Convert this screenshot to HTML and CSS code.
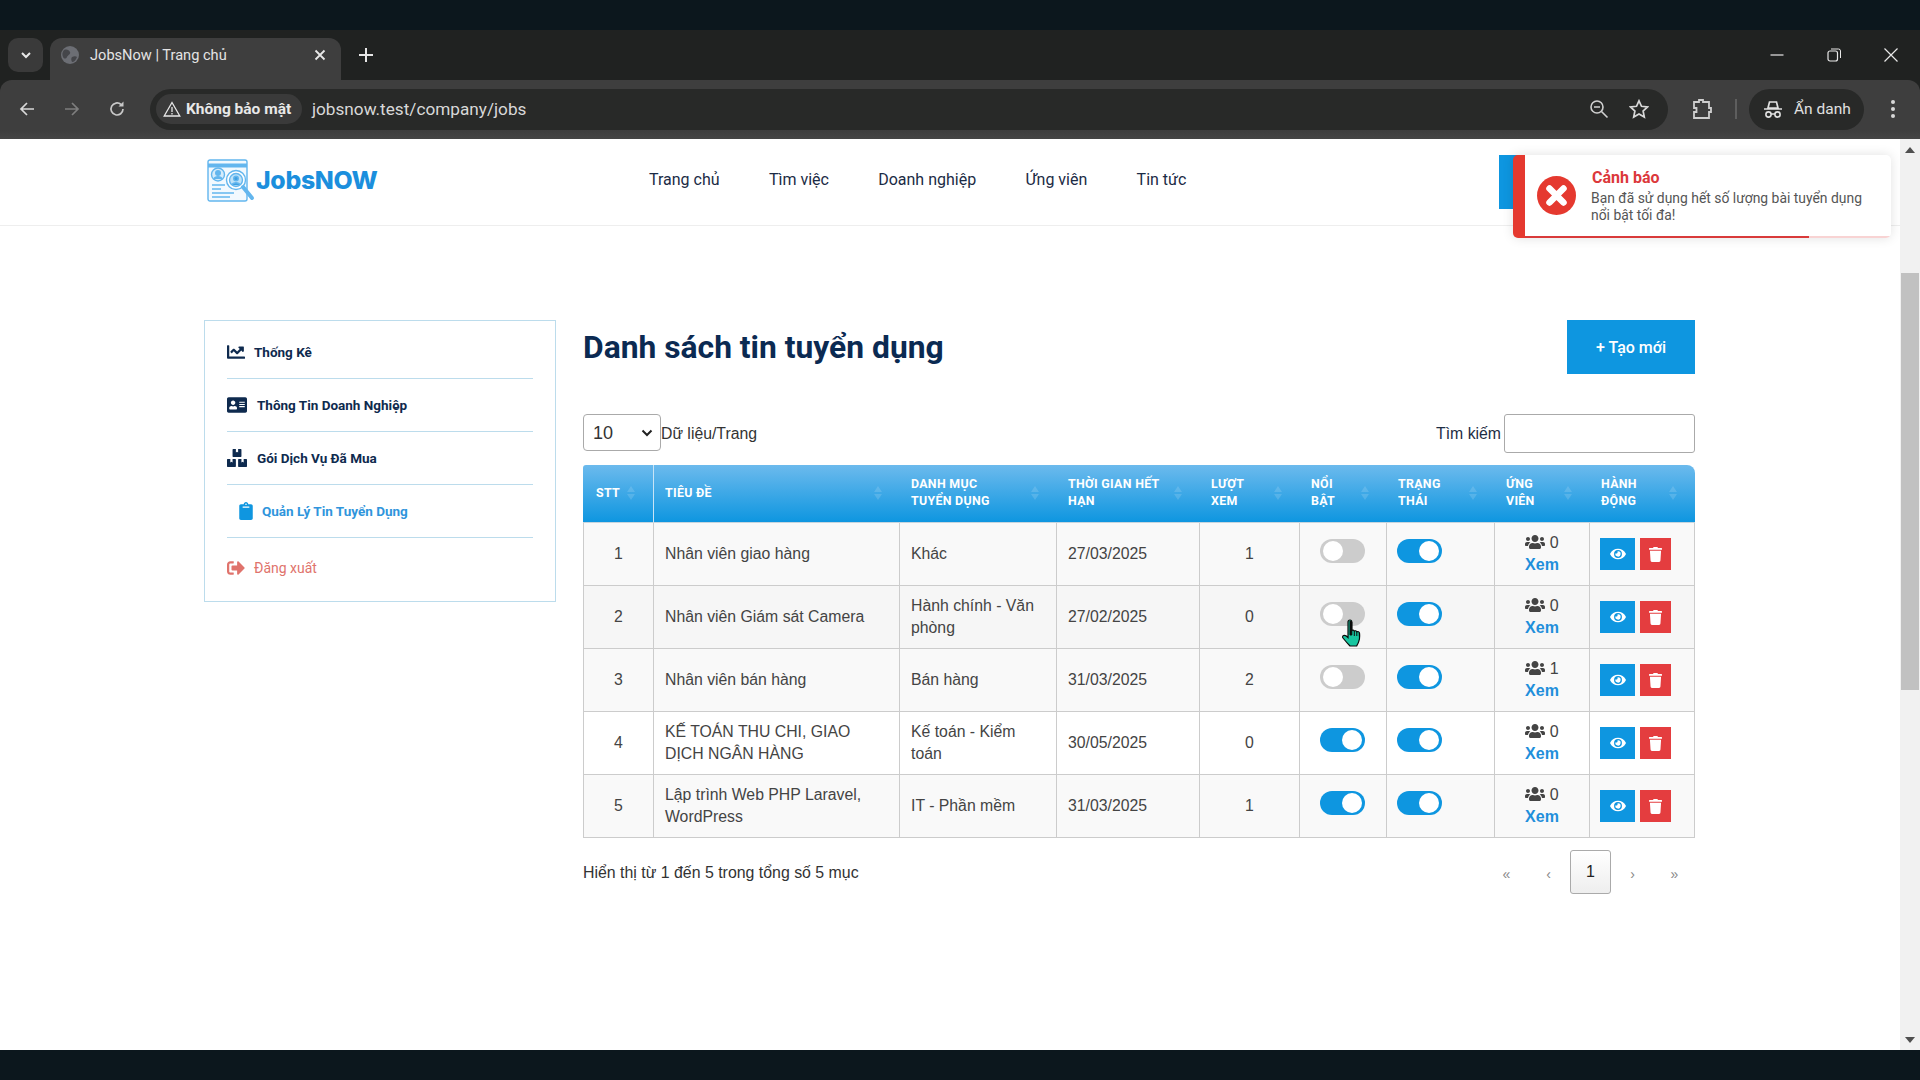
FILE: index.html
```html
<!DOCTYPE html>
<html lang="vi">
<head>
<meta charset="utf-8">
<title>JobsNow | Trang chủ</title>
<link rel="stylesheet" href="styles.css">
</head>
<body>
<svg class="defs" width="0" height="0" aria-hidden="true">
  <symbol id="i-eye" viewBox="0 0 576 512"><path d="M572.52 241.4C518.29 135.59 410.93 64 288 64S57.68 135.64 3.48 241.41a32.35 32.35 0 0 0 0 29.19C57.71 376.41 165.07 448 288 448s230.32-71.64 284.52-177.41a32.35 32.35 0 0 0 0-29.19zM288 400a144 144 0 1 1 144-144 143.93 143.93 0 0 1-144 144zm0-240a95.31 95.31 0 0 0-25.31 3.79 47.85 47.85 0 0 1-66.9 66.9A95.78 95.78 0 1 0 288 160z"/></symbol>
  <symbol id="i-trash" viewBox="0 0 448 512"><path d="M432 32H312l-9.4-18.7A24 24 0 0 0 281.1 0H166.8a23.72 23.72 0 0 0-21.4 13.3L136 32H16A16 16 0 0 0 0 48v32a16 16 0 0 0 16 16h416a16 16 0 0 0 16-16V48a16 16 0 0 0-16-16zM53.2 467a48 48 0 0 0 47.9 45h245.8a48 48 0 0 0 47.9-45L416 128H32z"/></symbol>
  <symbol id="i-users" viewBox="0 0 640 512"><path d="M96 224c35.3 0 64-28.7 64-64s-28.7-64-64-64-64 28.7-64 64 28.7 64 64 64zm448 0c35.3 0 64-28.7 64-64s-28.7-64-64-64-64 28.7-64 64 28.7 64 64 64zm32 32h-64c-17.6 0-33.5 7.1-45.1 18.6 40.3 22.1 68.9 62 75.1 109.4h66c17.7 0 32-14.3 32-32v-32c0-35.3-28.7-64-64-64zm-256 0c61.9 0 112-50.1 112-112S381.9 32 320 32 208 82.1 208 144s50.1 112 112 112zm76.8 32h-8.3c-20.8 10-43.9 16-68.5 16s-47.6-6-68.5-16h-8.3C179.6 288 128 339.6 128 403.2V432c0 26.5 21.5 48 48 48h288c26.5 0 48-21.5 48-48v-28.8c0-63.6-51.6-115.2-115.2-115.2zm-223.7-13.4C161.5 263.1 145.6 256 128 256H64c-35.3 0-64 28.7-64 64v32c0 17.7 14.3 32 32 32h65.9c6.3-47.4 34.9-87.3 75.2-109.4z"/></symbol>
</svg>

<div class="top-strip"></div>

<div class="tabstrip">
  <div class="tab-search">
    <svg width="14" height="14" viewBox="0 0 14 14"><path d="M3 5l4 4 4-4" fill="none" stroke="#e8e8e8" stroke-width="2"/></svg>
  </div>
  <div class="tab">
    <svg class="globe" width="20" height="20" viewBox="0 0 20 20"><circle cx="10" cy="10" r="9" fill="#6c6e74"/><path d="M4 5c3-1 5 0 6 2s-2 3-3 5-3 2-4 0-1-5 1-7zM12 12c2-1 4-1 5 0-1 3-3 5-5 5-1-2-1-4 0-5z" fill="#45464a"/></svg>
    <span class="tab-title">JobsNow | Trang chủ</span>
    <svg class="tab-close" width="14" height="14" viewBox="0 0 14 14"><path d="M2.5 2.5l9 9M11.500 2.500l-9 9" stroke="#e8e8e8" stroke-width="1.800"/></svg>
  </div>
  <svg class="tab-new" width="16" height="16" viewBox="0 0 16 16"><path d="M8 1v14M1 8h14" stroke="#e6e6e6" stroke-width="2"/></svg>
  <div class="win-controls">
    <svg width="14" height="14" viewBox="0 0 14 14"><path d="M0.500 7h13" stroke="#e8e8e8" stroke-width="1.200"/></svg>
    <svg width="14" height="14" viewBox="0 0 14 14"><rect x="1" y="3" width="9.500" height="10" rx="2" fill="none" stroke="#e8e8e8" stroke-width="1.200"/><path d="M4 1h7.500a2 2 0 0 1 2 2v7" fill="none" stroke="#e8e8e8" stroke-width="1"/></svg>
    <svg width="14" height="14" viewBox="0 0 14 14"><path d="M0.500 0.500l13 13M13.500 0.500l-13 13" stroke="#e8e8e8" stroke-width="1.200"/></svg>
  </div>
</div>

<div class="toolbar-wrap">
<div class="toolbar">
  <div class="nav-arrows">
    <svg width="18" height="18" viewBox="0 0 18 18"><path d="M16 9H3M9 3L3 9l6 6" fill="none" stroke="#d8d8d8" stroke-width="1.700"/></svg>
    <svg width="18" height="18" viewBox="0 0 18 18"><path d="M2 9h13M9 3l6 6-6 6" fill="none" stroke="#7e7e7e" stroke-width="1.700"/></svg>
    <svg width="18" height="18" viewBox="0 0 18 18"><path d="M15 9a6 6 0 1 1-2-4.500" fill="none" stroke="#c8c8c8" stroke-width="1.700"/><path d="M15.500 1.500v5h-5z" fill="#c8c8c8"/></svg>
  </div>
  <div class="omnibox">
    <div class="chip">
      <svg width="18" height="16" viewBox="0 0 18 16"><path d="M9 1.500L16.800 15H1.200zM9 6v5M9 12v1.500" fill="none" stroke="#e8e8e8" stroke-width="1.300"/></svg>
      <span class="chip-text">Không bảo mật</span>
    </div>
    <span class="url">jobsnow.test/company/jobs</span>
    <div class="omni-icons">
      <svg width="20" height="20" viewBox="0 0 20 20"><circle cx="8" cy="8" r="6" fill="none" stroke="#d0d0d0" stroke-width="1.600"/><path d="M5 8h6M12.500 12.500l6 6" stroke="#d0d0d0" stroke-width="1.600"/></svg>
      <svg width="20" height="20" viewBox="0 0 20 20"><path d="M10 1.800l2.500 5.500 6 .7-4.400 4 1.200 6L10 15l-5.300 3 1.200-6-4.400-4 6-.7z" fill="none" stroke="#d8d8d8" stroke-width="1.700"/></svg>
    </div>
  </div>
  <svg class="ext" width="22" height="22" viewBox="0 0 22 22"><path d="M3 4h5V2h4v2h6v6h2v4h-2v6H3v-6h2.500v-4H3z" fill="none" stroke="#cfcfcf" stroke-width="1.800"/></svg>
  <div class="divider"></div>
  <div class="incog">
    <svg width="20" height="20" viewBox="0 0 20 20"><path d="M5 9l1.500-6h7L15 9zM1 10h18" fill="none" stroke="#e0e0e0" stroke-width="1.700"/><circle cx="5.500" cy="15.500" r="2.600" fill="none" stroke="#e0e0e0" stroke-width="1.600"/><circle cx="14.500" cy="15.500" r="2.600" fill="none" stroke="#e0e0e0" stroke-width="1.600"/><path d="M8 15h4" stroke="#e0e0e0" stroke-width="1.500"/></svg>
    <span class="incog-text">Ẩn danh</span>
  </div>
  <svg class="dots" width="6" height="20" viewBox="0 0 6 20"><circle cx="3" cy="3" r="2" fill="#d8d8d8"/><circle cx="3" cy="10" r="2" fill="#d8d8d8"/><circle cx="3" cy="17" r="2" fill="#d8d8d8"/></svg>
</div>
</div>

<div class="viewport">
  <div class="page">
    <header class="site-header">
      <div class="logo">
        <svg width="48" height="48" viewBox="0 0 48 48" fill="none" stroke="#63b6ee" stroke-width="1.400">
          <rect x="1" y="1" width="39" height="41" rx="2" fill="#f2f9fe"/>
          <path d="M1 6.500h39" stroke-width="4"/>
          <circle cx="11" cy="15.500" r="6.500" fill="#d5ecfb"/>
          <circle cx="11" cy="14" r="2.300" fill="#63b6ee"/>
          <path d="M7 20c1-3 7-3 8 0" fill="#63b6ee"/>
          <path d="M5 26h13M5 30h9M5 34h22M5 38h18"/>
          <circle cx="29" cy="21" r="9.500" fill="#fff"/>
          <circle cx="29" cy="21" r="6.500" fill="#bfe2f8"/>
          <circle cx="29" cy="19.500" r="2.300" fill="#3f9fe0"/>
          <path d="M25 26c1-3 7-3 8 0" fill="#3f9fe0"/>
          <path d="M36 28l9 11" stroke-width="4" stroke="#63b6ee" stroke-linecap="round"/>
        </svg>
        <span class="logo-text">JobsNOW</span>
      </div>
      <nav class="main-nav">
        <span>Trang chủ</span>
        <span>Tìm việc</span>
        <span>Doanh nghiệp</span>
        <span>Ứng viên</span>
        <span>Tin tức</span>
      </nav>
      <div class="header-btn"></div>
    </header>

    <div class="content">
      <aside class="sidebar">
        <div class="side-item">
          <svg class="side-ico ico-chart" viewBox="0 0 512 512"><path d="M496 384H64V80c0-8.840-7.160-16-16-16H16C7.160 64 0 71.160 0 80v336c0 17.670 14.330 32 32 32h464c8.840 0 16-7.160 16-16v-32c0-8.840-7.160-16-16-16zM464 96H345.940c-21.380 0-32.090 25.850-16.970 40.970l32.400 32.400L288 242.750l-73.370-73.370c-12.500-12.500-32.760-12.500-45.250 0l-68.690 68.690c-6.250 6.250-6.250 16.380 0 22.630l22.620 22.620c6.250 6.250 16.380 6.250 22.630 0L192 237.250l73.370 73.370c12.500 12.500 32.760 12.500 45.250 0l96-96 32.400 32.400c15.120 15.120 40.970 4.410 40.970-16.970V112c.01-8.840-7.150-16-15.990-16z"/></svg>
          <span>Thống Kê</span>
        </div>
        <div class="side-item">
          <svg class="side-ico ico-card" viewBox="0 0 576 512"><path d="M528 32H48C21.500 32 0 53.500 0 80v352c0 26.500 21.500 48 48 48h480c26.500 0 48-21.500 48-48V80c0-26.500-21.500-48-48-48zm-352 96c35.300 0 64 28.700 64 64s-28.700 64-64 64-64-28.700-64-64 28.700-64 64-64zm112 236.800c0 10.600-10 19.200-22.400 19.200H86.400C74 384 64 375.400 64 364.800v-19.200c0-31.800 30.100-57.600 67.200-57.600h5c12.300 5.100 25.700 8 39.800 8s27.600-2.900 39.800-8h5c37.100 0 67.200 25.800 67.200 57.600v19.200zM512 312c0 4.400-3.600 8-8 8H360c-4.400 0-8-3.600-8-8v-16c0-4.400 3.600-8 8-8h144c4.400 0 8 3.600 8 8v16zm0-64c0 4.400-3.600 8-8 8H360c-4.400 0-8-3.600-8-8v-16c0-4.400 3.600-8 8-8h144c4.400 0 8 3.600 8 8v16zm0-64c0 4.400-3.600 8-8 8H360c-4.400 0-8-3.600-8-8v-16c0-4.400 3.600-8 8-8h144c4.400 0 8 3.600 8 8v16z"/></svg>
          <span>Thông Tin Doanh Nghiệp</span>
        </div>
        <div class="side-item">
          <svg class="side-ico ico-card" viewBox="0 0 576 512"><path d="M560 288h-80v96l-32-21.300-32 21.300v-96h-80c-8.800 0-16 7.200-16 16v192c0 8.800 7.200 16 16 16h224c8.800 0 16-7.200 16-16V304c0-8.800-7.200-16-16-16zm-384-64h224c8.800 0 16-7.200 16-16V16c0-8.800-7.200-16-16-16h-80v96l-32-21.300L256 96V0h-80c-8.800 0-16 7.200-16 16v192c0 8.800 7.200 16 16 16zm64 64h-80v96l-32-21.300L96 384v-96H16c-8.800 0-16 7.200-16 16v192c0 8.800 7.200 16 16 16h224c8.800 0 16-7.200 16-16V304c0-8.800-7.200-16-16-16z"/></svg>
          <span>Gói Dịch Vụ Đã Mua</span>
        </div>
        <div class="side-item active">
          <svg class="side-ico ico-clip" viewBox="0 0 384 512"><path d="M384 112v352c0 26.510-21.490 48-48 48H48c-26.510 0-48-21.490-48-48V112c0-26.510 21.490-48 48-48h80c0-35.290 28.710-64 64-64s64 28.710 64 64h80c26.510 0 48 21.490 48 48zM192 40c-13.255 0-24 10.745-24 24s10.745 24 24 24 24-10.745 24-24-10.745-24-24-24m96 114v-20a6 6 0 0 0-6-6H102a6 6 0 0 0-6 6v20a6 6 0 0 0 6 6h180a6 6 0 0 0 6-6z"/></svg>
          <span>Quản Lý Tin Tuyển Dụng</span>
        </div>
        <div class="side-item logout">
          <svg class="side-ico ico-chart" viewBox="0 0 512 512"><path d="M497 273L329 441c-15 15-41 4.500-41-17v-96H152c-13.300 0-24-10.700-24-24v-96c0-13.300 10.700-24 24-24h136V88c0-21.400 25.900-32 41-17l168 168c9.300 9.400 9.300 24.600 0 34zM192 436v-40c0-6.600-5.400-12-12-12H96c-17.700 0-32-14.300-32-32V160c0-17.700 14.300-32 32-32h84c6.600 0 12-5.400 12-12V76c0-6.600-5.400-12-12-12H96c-53 0-96 43-96 96v192c0 53 43 96 96 96h84c6.600 0 12-5.400 12-12z"/></svg>
          <span>Đăng xuất</span>
        </div>
      </aside>

      <main class="main">
        <div class="title-row">
          <h1 class="title">Danh sách tin tuyển dụng</h1>
          <div class="btn-create">+ Tạo mới</div>
        </div>

        <div class="controls">
          <div class="ctrl-left">
            <select class="page-size"><option>10</option></select>
            <span class="ctrl-label">Dữ liệu/Trang</span>
          </div>
          <div class="ctrl-right">
            <span class="ctrl-label search-label">Tìm kiếm</span>
            <input class="search" type="text">
          </div>
        </div>

        <table class="jobs">
          <colgroup>
            <col class="c1"><col class="c2"><col class="c3"><col class="c4"><col class="c5"><col class="c6"><col class="c7"><col class="c8"><col class="c9">
          </colgroup>
          <thead>
            <tr>
              <th class="th-first">STT</th>
              <th>Tiêu đề</th>
              <th>Danh mục tuyển dụng</th>
              <th>Thời gian hết hạn</th>
              <th>Lượt xem</th>
              <th>Nổi bật</th>
              <th>Trạng thái</th>
              <th>Ứng viên</th>
              <th class="th-last">Hành động</th>
            </tr>
          </thead>
          <tbody>
            <tr class="odd">
              <td class="center">1</td>
              <td>Nhân viên giao hàng</td>
              <td>Khác</td>
              <td>27/03/2025</td>
              <td class="center">1</td>
              <td><span class="toggle"></span></td>
              <td class="tight"><span class="toggle on"></span></td>
              <td class="center"><div class="cand"><svg class="users"><use href="#i-users"/></svg> 0</div><a class="xem">Xem</a></td>
              <td><div class="actions"><span class="act view"><svg class="i-eye"><use href="#i-eye"/></svg></span><span class="act del"><svg class="i-trash"><use href="#i-trash"/></svg></span></div></td>
            </tr>
            <tr class="hover">
              <td class="center">2</td>
              <td>Nhân viên Giám sát Camera</td>
              <td>Hành chính - Văn phòng</td>
              <td>27/02/2025</td>
              <td class="center">0</td>
              <td><span class="toggle"></span></td>
              <td class="tight"><span class="toggle on"></span></td>
              <td class="center"><div class="cand"><svg class="users"><use href="#i-users"/></svg> 0</div><a class="xem">Xem</a></td>
              <td><div class="actions"><span class="act view"><svg class="i-eye"><use href="#i-eye"/></svg></span><span class="act del"><svg class="i-trash"><use href="#i-trash"/></svg></span></div></td>
            </tr>
            <tr class="odd">
              <td class="center">3</td>
              <td>Nhân viên bán hàng</td>
              <td>Bán hàng</td>
              <td>31/03/2025</td>
              <td class="center">2</td>
              <td><span class="toggle"></span></td>
              <td class="tight"><span class="toggle on"></span></td>
              <td class="center"><div class="cand"><svg class="users"><use href="#i-users"/></svg> 1</div><a class="xem">Xem</a></td>
              <td><div class="actions"><span class="act view"><svg class="i-eye"><use href="#i-eye"/></svg></span><span class="act del"><svg class="i-trash"><use href="#i-trash"/></svg></span></div></td>
            </tr>
            <tr>
              <td class="center">4</td>
              <td>KẾ TOÁN THU CHI, GIAO DỊCH NGÂN HÀNG</td>
              <td>Kế toán - Kiểm toán</td>
              <td>30/05/2025</td>
              <td class="center">0</td>
              <td><span class="toggle on"></span></td>
              <td class="tight"><span class="toggle on"></span></td>
              <td class="center"><div class="cand"><svg class="users"><use href="#i-users"/></svg> 0</div><a class="xem">Xem</a></td>
              <td><div class="actions"><span class="act view"><svg class="i-eye"><use href="#i-eye"/></svg></span><span class="act del"><svg class="i-trash"><use href="#i-trash"/></svg></span></div></td>
            </tr>
            <tr class="odd">
              <td class="center">5</td>
              <td>Lập trình Web PHP Laravel, WordPress</td>
              <td>IT - Phần mềm</td>
              <td>31/03/2025</td>
              <td class="center">1</td>
              <td><span class="toggle on"></span></td>
              <td class="tight"><span class="toggle on"></span></td>
              <td class="center"><div class="cand"><svg class="users"><use href="#i-users"/></svg> 0</div><a class="xem">Xem</a></td>
              <td><div class="actions"><span class="act view"><svg class="i-eye"><use href="#i-eye"/></svg></span><span class="act del"><svg class="i-trash"><use href="#i-trash"/></svg></span></div></td>
            </tr>
          </tbody>
        </table>

        <div class="table-foot">
          <span class="info">Hiển thị từ 1 đến 5 trong tổng số 5 mục</span>
          <div class="pager">
            <span class="pg">«</span>
            <span class="pg">‹</span>
            <span class="pg current">1</span>
            <span class="pg">›</span>
            <span class="pg">»</span>
          </div>
        </div>
      </main>
    </div>

    <div class="toast">
      <svg class="toast-ico" width="39" height="39" viewBox="0 0 39 39"><circle cx="19.500" cy="19.500" r="19.500" fill="#e5392f"/><path d="M12.500 12.500l14 14M26.500 12.500l-14 14" stroke="#fff" stroke-width="6.500" stroke-linecap="round"/></svg>
      <div class="toast-body">
        <div class="toast-title">Cảnh báo</div>
        <div class="toast-msg">Bạn đã sử dụng hết số lượng bài tuyển dụng nổi bật tối đa!</div>
      </div>
      <div class="toast-progress"></div>
    </div>

    <svg class="cursor" width="22" height="28" viewBox="0 0 22 28">
      <path d="M8 1c1.200 0 1.800.9 1.800 2v8.500c.8-.6 2-.4 2.500.5.9-.5 2-.3 2.500.7 1-.4 2.500 0 2.700 1.400.3 3 .2 6-.7 8.200-.6 2-1.500 3.300-2.100 4.700H8C5.500 24.500 3 21.500 1 19c-.7-1-.4-2 .6-2.500 1.200-.6 2.800.3 4.400 2V3c0-1.100.8-2 2-2z" fill="#17c6a0" stroke="#0a0a0a" stroke-width="1.200"/>
      <path d="M8 2v14h1.800V3zM12.300 12v5M14.800 12.700V17M17.300 14v3.500" fill="#0a0a0a" stroke="#0a0a0a" stroke-width="1"/>
    </svg>
  </div>

  <div class="scrollbar">
    <div class="sb-btn"><span class="tri-up"></span></div>
    <div class="sb-thumb"></div>
    <div class="sb-track"></div>
    <div class="sb-btn"><span class="tri-down"></span></div>
  </div>
</div>

<div class="bottom-strip"></div>
</body>
</html>
```
FILE: styles.css
```css
* { box-sizing: border-box; }
html, body { margin: 0; padding: 0; }
body {
  width: 1920px;
  height: 1080px;
  overflow: hidden;
  display: flex;
  flex-direction: column;
  font-family: "Liberation Sans", Arial, sans-serif;
  background: #fff;
}
.defs { position: absolute; }
.top-strip, .bottom-strip { height: 30px; background: #0c171d; flex: none; }

/* browser chrome */
.tabstrip {
  height: 50px;
  flex: none;
  background: #202221;
  display: flex;
  align-items: flex-start;
  padding: 8px 0 0 8px;
}
.tab-search {
  width: 35px;
  height: 34px;
  border-radius: 10px;
  background: #3a3a3a;
  display: flex;
  align-items: center;
  justify-content: center;
}
.tab {
  width: 291px;
  height: 42px;
  margin-left: 7px;
  border-radius: 12px 12px 0 0;
  background: #3e3e3e;
  display: flex;
  align-items: center;
  padding: 0 14px 8px 10px;
}
.globe { flex: none; }
.tab-title {
  margin-left: 10px;
  flex: 1;
  color: #e4e4e4;
  font: 400 14.6px Roboto, sans-serif;
}
.tab-new { margin: 9px 0 0 17px; }
.win-controls {
  margin-left: auto;
  display: flex;
  gap: 43px;
  padding: 10px 22px 0 0;
}
.toolbar-wrap { flex: none; background: #202221; }
.toolbar {
  height: 59px;
  background: linear-gradient(#3e3e3e, #3e3e3e 85%, #454545);
  border-radius: 12px 12px 0 0;
  display: flex;
  align-items: center;
  padding: 0 24px 1px 18px;
}
.nav-arrows { display: flex; gap: 27px; width: 114px; }
.omnibox {
  width: 1519px;
  height: 41px;
  margin-left: 18px;
  border-radius: 21px;
  background: #282928;
  display: flex;
  align-items: center;
  padding: 0 19px 0 6px;
}
.chip {
  height: 30px;
  width: 146px;
  border-radius: 15px;
  background: #3a3a3a;
  display: flex;
  align-items: center;
  padding-left: 7px;
  gap: 5px;
}
.chip-text {
  color: #e8e8e8;
  font: 700 15.5px Roboto, sans-serif;
  white-space: nowrap;
}
.url {
  margin-left: 10px;
  color: #d8d8d8;
  font: 400 17.2px Roboto, sans-serif;
}
.omni-icons { margin-left: auto; display: flex; gap: 20px; }
.ext { margin-left: 23px; flex: none; }
.divider { width: 2px; height: 20px; background: #5e5e5e; margin-left: 22px; flex: none; }
.incog {
  width: 115px;
  height: 41px;
  margin-left: 12px;
  border-radius: 21px;
  background: #282928;
  display: flex;
  align-items: center;
  padding-left: 14px;
  gap: 11px;
  flex: none;
}
.incog-text { color: #e0e0e0; font: 400 15.5px Roboto, sans-serif; white-space: nowrap; }
.dots { margin-left: 26px; flex: none; }

/* page */
.viewport { flex: 1; display: flex; min-height: 0; }
.page { flex: 1; position: relative; overflow: hidden; background: #fff; }
.scrollbar { width: 20px; background: #f1f1f1; display: flex; flex-direction: column; }
.sb-btn { height: 21px; flex: none; display: flex; align-items: center; justify-content: center; }
.tri-up { border: 5px solid transparent; border-top: 0; border-bottom: 6px solid #505050; }
.tri-down { border: 5px solid transparent; border-bottom: 0; border-top: 6px solid #505050; }
.sb-thumb { height: 417px; margin: 113px 1px 0; background: #c1c1c1; flex: none; }
.sb-track { flex: 1; }

.site-header {
  height: 87px;
  border-bottom: 1px solid #eeeeee;
  display: flex;
  align-items: center;
  padding: 0 205px 0 207px;
}
.logo { display: flex; align-items: center; width: 171px; flex: none; }
.logo svg { flex: none; margin-top: 2px; }
.logo-text {
  margin: 0 0 5px 1px;
  color: #1b8fdd;
  font: 800 24.8px Inter, sans-serif;
  letter-spacing: -.3px;
  white-space: nowrap;
}
.main-nav {
  display: flex;
  gap: 49.3px;
  margin: 0 0 6px 271px;
  color: #1b2b45;
  font: 400 16px Roboto, sans-serif;
}
.header-btn { margin-left: auto; width: 196px; height: 54px; background: #0e96e0; }

.content {
  display: flex;
  align-items: flex-start;
  gap: 27px;
  padding: 94px 205px 0 204px;
}
.sidebar {
  width: 352px;
  flex: none;
  height: 282px;
  border: 1px solid #bcdcec;
  padding: 5px 22px 0;
  font: 700 13.5px Roboto, sans-serif;
  color: #0e2a4e;
}
.side-item {
  height: 53px;
  display: flex;
  align-items: center;
  border-bottom: 1px solid #bcdcec;
  fill: #0e2a4e;
}
.side-ico { flex: none; }
.ico-chart { width: 18px; height: 18px; margin-right: 9px; }
.ico-card { width: 20px; height: 18px; margin-right: 10px; }
.ico-clip { width: 14px; height: 18px; margin: 0 9px 0 12px; }
.side-item.active { color: #2f95dc; fill: #0f96e0; }
.side-item.logout { border-bottom: 0; height: 59px; color: #e0736c; fill: #e0736c; font-weight: 400; font-size: 14px; }

.main { flex: 1; min-width: 0; }
.title-row { display: flex; justify-content: space-between; align-items: center; height: 54px; }
.title {
  margin: 0;
  color: #0b2a52;
  font: 700 31.8px Roboto, sans-serif;
}
.btn-create {
  width: 128px;
  height: 54px;
  background: #0e96e0;
  color: #fff;
  font: 500 16px Roboto, sans-serif;
  display: flex;
  align-items: center;
  justify-content: center;
}
.controls {
  margin-top: 40px;
  height: 51px;
  display: flex;
  justify-content: space-between;
  align-items: flex-start;
}
.ctrl-left, .ctrl-right { display: flex; align-items: center; }
.ctrl-label { font-size: 15.8px; color: #333; white-space: nowrap; }
.ctrl-left .ctrl-label { padding-top: 2px; }
.page-size {
  appearance: none;
  width: 78px;
  height: 37px;
  padding: 0 0 0 9px;
  border: 1px solid #aaa;
  border-radius: 4px;
  background: #fff url("data:image/svg+xml,%3Csvg xmlns='http://www.w3.org/2000/svg' width='12' height='8'%3E%3Cpath d='M1.500 1.500L6 6l4.500-4.500' fill='none' stroke='%23222' stroke-width='2'/%3E%3C/svg%3E") no-repeat right 7px center;
  font: 400 18px "Liberation Sans", sans-serif;
  color: #333;
}
.search-label { margin-right: 3px; color: #1d2d44; }
.search {
  width: 191px;
  height: 39px;
  border: 1px solid #aaa;
  border-radius: 3px;
  background: #fff;
}

.jobs {
  width: 1112px;
  table-layout: fixed;
  border-collapse: separate;
  border-spacing: 0;
  font-size: 15.8px;
  line-height: 22px;
  color: #444;
}
.c1 { width: 71px; }
.c2 { width: 246px; }
.c3 { width: 157px; }
.c4 { width: 143px; }
.c5 { width: 100px; }
.c6 { width: 87px; }
.c7 { width: 108px; }
.c8 { width: 95px; }
.c9 { width: 105px; }
.jobs th {
  position: relative;
  height: 58px;
  padding: 0 40px 3px 11px;
  text-align: left;
  text-transform: uppercase;
  color: #fff;
  font: 700 12.4px/17px Roboto, sans-serif;
  letter-spacing: .3px;
  background: linear-gradient(#6cbaed, #0e96e0);
  border-bottom: 1px solid #c7d5de;
}
.jobs th::before, .jobs th::after {
  content: "";
  position: absolute;
  right: 18px;
  border: 4px solid transparent;
}
.jobs th::before { top: 21px; border-top: 0; border-bottom: 6px solid rgba(255,255,255,.14); }
.jobs th::after { top: 29px; border-bottom: 0; border-top: 6px solid rgba(255,255,255,.14); }
.jobs .th-first { border-right: 1px solid #c8e4f6; border-top-left-radius: 3px; padding: 0 0 3px 13px; }
.jobs .th-last { border-top-right-radius: 8px; }
.jobs td {
  height: 63px;
  padding: 0 11px;
  border-right: 1px solid #ccc;
  border-bottom: 1px solid #ccc;
  vertical-align: middle;
}
.jobs td:first-child { border-left: 1px solid #ccc; }
.jobs tr.odd td { background: #f9f9f9; }
.jobs tr.hover td { background: #f6f6f6; }
.jobs td.center { text-align: center; padding: 0 4px; }
.jobs td.tight { padding-left: 10px; }
.toggle {
  display: flex;
  width: 45px;
  height: 24px;
  margin: 0 0 6px 9px;
  padding: 2px 3px;
  border-radius: 12px;
  background: #cccccc;
}
.tight .toggle { margin-left: 0; }
.toggle::before { content: ""; width: 20px; height: 20px; border-radius: 50%; background: #fff; }
.toggle.on { background: #0e96e0; justify-content: flex-end; }
.cand { line-height: 22px; color: #444; font-size: 16px; }
.users { width: 20px; height: 16px; fill: #444; vertical-align: -2px; }
.xem { display: block; color: #1f8fdb; font-weight: 700; font-size: 16px; line-height: 22px; }
.actions { display: flex; gap: 5px; margin-left: -1px; }
.act { height: 32px; display: flex; align-items: center; justify-content: center; }
.view { width: 35px; background: #0e96e0; fill: #fff; }
.del { width: 31px; background: #e43d3f; fill: #fff; }
.i-eye { width: 16px; height: 14px; }
.i-trash { width: 13px; height: 15px; }

.table-foot {
  margin-top: 12px;
  display: flex;
  justify-content: space-between;
  align-items: center;
  height: 44px;
}
.info { font-size: 15.9px; color: #333; padding-top: 2px; }
.pager { display: flex; gap: 1px; }
.pg {
  width: 41px;
  height: 44px;
  display: flex;
  align-items: center;
  justify-content: center;
  color: #888;
  font: 400 14px "Liberation Sans", sans-serif;
  padding-top: 4px;
}
.pg.current {
  border: 1px solid #aaa;
  border-radius: 3px;
  background: linear-gradient(#fff, #eee);
  color: #222;
  font-size: 16px;
  padding-top: 0;
}

/* overlays */
.toast {
  position: absolute;
  top: 16px;
  right: 9px;
  width: 378px;
  height: 83px;
  background: #fff;
  border-left: 12px solid #e5392f;
  border-radius: 5px;
  box-shadow: 0 0 12px rgba(0,0,0,.12);
  display: flex;
  align-items: center;
  padding: 0 14px 2px 12px;
  overflow: hidden;
}
.toast-ico { flex: none; }
.toast-body { margin-left: 15px; min-width: 0; }
.toast-title { color: #dc383b; font: 700 16px/20px Roboto, sans-serif; margin: 0 0 2px 1px; }
.toast-msg { color: #555; font: 400 13.9px/17px Roboto, sans-serif; }
.toast-progress {
  position: absolute;
  left: 0;
  right: 0;
  bottom: 0;
  height: 2px;
  background: linear-gradient(90deg, #d93a3a 0, #d93a3a 284px, #f8d3d3 284px);
}
.cursor { position: absolute; left: 1342px; top: 480px; }
```
